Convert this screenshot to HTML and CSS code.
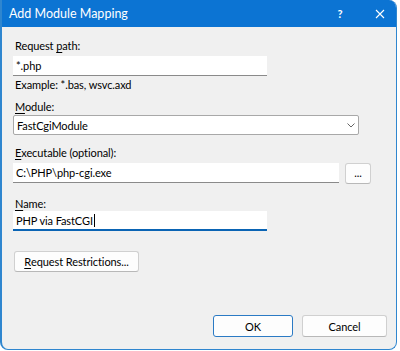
FILE: index.html
```html
<!DOCTYPE html>
<html>
<head>
<meta charset="utf-8">
<link rel="stylesheet" href="styles.css">
</head>
<body>
<div class="window">
  <div class="titlebar">
    <span class="title">Add Module Mapping</span>
    <span class="tb-help">?</span>
    <span class="tb-close">
      <svg width="10" height="10" viewBox="0 0 10 10"><path d="M1 1L9 9M9 1L1 9" stroke="#fff" stroke-width="1.1" fill="none"/></svg>
    </span>
  </div>
  <div class="content">
    <div class="label l-first">Request <u>p</u>ath:</div>
    <div class="field short">*.php</div>
    <div class="hint">Example: *.bas, wsvc.axd</div>

    <div class="label l-module"><u>M</u>odule:</div>
    <div class="select">
      <span>FastCgiModule</span>
      <svg width="8" height="5" viewBox="0 0 8 5"><path d="M0.5 0.5L4 4L7.5 0.5" stroke="#666" stroke-width="1" fill="none"/></svg>
    </div>

    <div class="label l-exec"><u>E</u>xecutable (optional):</div>
    <div class="row">
      <div class="field exec">C:\PHP\php-cgi.exe</div>
      <div class="btn browse">...</div>
    </div>

    <div class="label l-name"><u>N</u>ame:</div>
    <div class="field short focused">PHP via FastCGI<span class="caret"></span></div>

    <div class="btn restrict"><u>R</u>equest Restrictions...</div>

    <div class="footer">
      <div class="btn ok">OK</div>
      <div class="btn cancel">Cancel</div>
    </div>
  </div>
</div>
</body>
</html>
```

FILE: styles.css
```css
* { box-sizing: border-box; }
html, body { margin: 0; padding: 0; background: #ffffff; }
body {
  font-family: "Lato", "Open Sans", sans-serif;
  font-size: 11px;
  letter-spacing: -0.1px;
  color: #000;
  width: 400px;
  height: 351px;
  overflow: hidden;
}
.window {
  width: 397px;
  height: 350px;
  background: #f0f0f0;
  border: 1px solid #2f86cf;
  border-top: none;
  border-left-width: 2px;
  border-radius: 0 8px 8px 8px;
  overflow: hidden;
  display: flex;
  flex-direction: column;
}
.titlebar {
  height: 27px;
  background: #0c74d3;
  color: #fff;
  display: flex;
  align-items: center;
  padding-left: 7px;
  flex: none;
}
.title { font-size: 12.5px; letter-spacing: 0; flex: 1; }
.tb-help { font-size: 11px; font-weight: bold; width: 20px; margin-right: 20px; text-align: center; }
.tb-close { width: 20px; margin-right: 6px; display: flex; justify-content: center; }
.content {
  flex: 1;
  padding: 11px 0 0 11px;
  display: flex;
  flex-direction: column;
  align-items: flex-start;
}
.label { line-height: 15px; height: 15px; padding-left: 2px; }
.l-first { margin-bottom: 3px; }
.l-module { margin-top: 7px; margin-bottom: 1px; }
.l-exec { margin-top: 10px; margin-bottom: 3px; }
.l-name { margin-top: 12px; margin-bottom: 0px; }
u { text-decoration: underline; text-underline-offset: 2px; }
.field {
  background: #fff;
  height: 20px;
  line-height: 19px;
  padding-left: 3px;
  border-bottom: 1px solid #8a8a8a;
}
.short { width: 254px; }
.hint { line-height: 15px; margin-top: 1px; padding-left: 2px; }
.select {
  width: 346px;
  height: 20px;
  background: #fff;
  border: 1px solid #a8a8a8;
  border-radius: 2px;
  display: flex;
  align-items: center;
  justify-content: space-between;
  padding: 0 3px 0 3px;
}
.row { display: flex; gap: 6px; }
.exec { width: 326px; }
.btn {
  background: #fdfdfd;
  border: 1px solid #d0d0d0;
  border-bottom-color: #b8b8b8;
  border-radius: 3px;
  display: flex;
  align-items: center;
  justify-content: center;
  height: 21px;
}
.browse { width: 26px; font-size: 11px; line-height: 1; padding-bottom: 3px; }
.focused { border-bottom: 2px solid #0a64b4; }
.caret {
  display: inline-block;
  width: 1px;
  height: 13px;
  background: #000;
  vertical-align: -2px;
  margin-left: 1px;
}
.restrict { margin-top: 20px; margin-left: 1px; width: 125px; }
.footer {
  margin-top: auto;
  margin-bottom: 12px;
  align-self: stretch;
  display: flex;
  justify-content: flex-end;
  gap: 9px;
  padding-right: 9px;
}
.ok { width: 80px; height: 22px; border: 1px solid #2b7ac4; }
.cancel { width: 85px; height: 22px; }
```
